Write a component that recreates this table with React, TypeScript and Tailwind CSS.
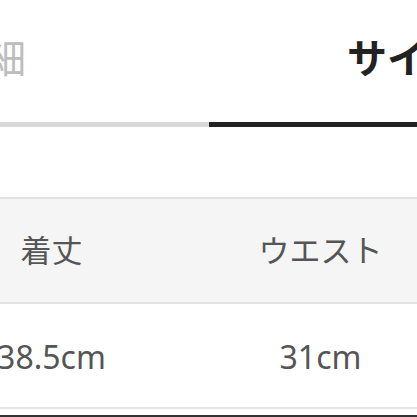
export default function App() {
  const font = { fontFamily: '"Noto Sans", "Noto Sans CJK JP", sans-serif' };

  return (
    <div className="w-[417px] h-[417px] overflow-hidden bg-white" style={font}>
      {/* Tabs */}
      <div className="flex h-[127px]">
        <div className="w-[209px] shrink-0 flex items-center border-b-[5px] border-[#d9d9d9] pb-[7px]">
          <span className="-ml-[134px] whitespace-nowrap text-[40px] font-normal text-[#bdbdbd] leading-none">
            商品詳細
          </span>
        </div>
        <div className="w-[418px] shrink-0 flex items-center border-b-[5px] border-[#222] pb-[7px]">
          <span className="ml-[138px] whitespace-nowrap text-[40px] font-bold text-[#222] leading-none">
            サイズ表
          </span>
        </div>
      </div>

      {/* Size table */}
      <div className="mt-[70px] -ml-[83px] w-[538px]">
        <div className="grid grid-cols-2 h-[107px] bg-[#f5f5f5] border-y-2 border-[#e2e2e2]">
          <div className="flex items-center justify-center text-[31px] text-[#555]">着丈</div>
          <div className="flex items-center justify-center text-[31px] text-[#555]">ウエスト</div>
        </div>
        <div className="grid grid-cols-2 h-[105px] bg-white border-b-2 border-[#e6e6e6]">
          <div className="flex items-center justify-center pt-[2px] text-[32px] text-[#555]">38.5cm</div>
          <div className="flex items-center justify-center pt-[2px] text-[32px] text-[#555]">31cm</div>
        </div>
        <div className="mt-[6px] h-[4px] bg-[#333]" />
      </div>
    </div>
  );
}
